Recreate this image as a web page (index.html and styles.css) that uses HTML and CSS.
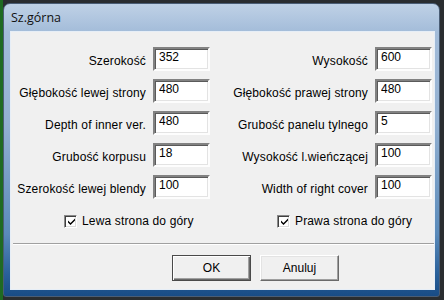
FILE: index.html
```html
<!DOCTYPE html>
<html lang="pl">
<head>
<meta charset="utf-8">
<title>Sz.górna</title>
<link rel="stylesheet" href="styles.css">
</head>
<body>
<div class="window">
  <div class="titlebar"><span class="title">Sz.górna</span></div>
  <div class="client">
    <div class="fields">
      <label class="lbl">Szerokość</label><input class="edit" type="text" value="352">
      <label class="lbl">Wysokość</label><input class="edit" type="text" value="600">
      <label class="lbl">Głębokość lewej strony</label><input class="edit" type="text" value="480">
      <label class="lbl">Głębokość prawej strony</label><input class="edit" type="text" value="480">
      <label class="lbl">Depth of inner ver.</label><input class="edit" type="text" value="480">
      <label class="lbl">Grubość panelu tylnego</label><input class="edit" type="text" value="5">
      <label class="lbl">Grubość korpusu</label><input class="edit" type="text" value="18">
      <label class="lbl">Wysokość l.wieńczącej</label><input class="edit" type="text" value="100">
      <label class="lbl">Szerokość lewej blendy</label><input class="edit" type="text" value="100">
      <label class="lbl">Width of right cover</label><input class="edit" type="text" value="100">
    </div>
    <div class="checks">
      <label class="check"><span class="box"><svg width="9" height="9" viewBox="0 0 9 9"><path d="M1 3.5 L3.5 6 L8 1.5 L8 3.5 L3.5 8 L1 5.5 Z" fill="#000"/></svg></span><span>Lewa strona do góry</span></label>
      <label class="check"><span class="box"><svg width="9" height="9" viewBox="0 0 9 9"><path d="M1 3.5 L3.5 6 L8 1.5 L8 3.5 L3.5 8 L1 5.5 Z" fill="#000"/></svg></span><span>Prawa strona do góry</span></label>
    </div>
    <div class="sep"></div>
    <div class="buttons">
      <button class="btn default" type="button">OK</button>
      <button class="btn" type="button">Anuluj</button>
    </div>
  </div>
</div>
</body>
</html>
```
FILE: styles.css
```css
html, body {
  margin: 0;
  padding: 0;
}
body {
  width: 444px;
  height: 300px;
  overflow: hidden;
  background: linear-gradient(90deg, #1f6a22 0 3px, #2a2d30 3px);
  font-family: "Liberation Sans", Arial, sans-serif;
  font-size: 12px;
  color: #000;
}
.window {
  box-sizing: border-box;
  margin: 3px 0 0 3px;
  width: 437px;
  height: 294px;
  padding: 0 6px 6px 6px;
  border-radius: 7px 7px 3px 3px;
  border: 1px solid #4a5d75;
  background: linear-gradient(180deg, #bfd1e6 0px, #a3bcd9 28px, #92b0d1 120px, #5a8aba 230px, #29609a 270px, #174a84 294px);
  display: flex;
  flex-direction: column;
}
.titlebar {
  height: 27px;
  display: flex;
  align-items: flex-start;
}
.title {
  font-family: "Open Sans", "Noto Sans", sans-serif;
  font-size: 12.5px;
  line-height: 14px;
  padding: 7px 0 0 1px;
  color: #111;
}
.client {
  box-sizing: border-box;
  width: 425px;
  height: 260px;
  background: #f0f0f0;
  border: 1px solid #e6eef7;
  padding-top: 15px;
}
.fields {
  display: grid;
  grid-template-columns: 135px 57px 151px 57px;
  grid-auto-rows: 24px;
  column-gap: 7px;
  row-gap: 8px;
}
.lbl {
  text-align: right;
  white-space: nowrap;
  line-height: 14px;
  padding-top: 7px;
  letter-spacing: 0.15px;
}
.edit {
  box-sizing: border-box;
  width: 57px;
  height: 24px;
  margin: 0;
  padding: 1px 4px 5px 4px;
  font-family: "Liberation Sans", Arial, sans-serif;
  font-size: 12px;
  line-height: 14px;
  color: #000;
  background: #fff;
  border: 2px solid;
  border-color: #828282 #fdfdfd #fdfdfd #828282;
  box-shadow: inset 1px 1px 0 #5a5a5a, inset -1px -1px 0 #e3e3e3;
  outline: none;
}
.checks {
  display: grid;
  grid-template-columns: 213px auto;
  padding-left: 53px;
  margin-top: 16px;
  height: 13px;
}
.check {
  display: flex;
  align-items: center;
  gap: 5px;
  line-height: 13px;
  white-space: nowrap;
  letter-spacing: 0.15px;
}
.box {
  box-sizing: border-box;
  width: 13px;
  height: 13px;
  background: #fff;
  border: 1px solid;
  border-color: #8a8a8a #ffffff #ffffff #8a8a8a;
  box-shadow: inset 1px 1px 0 #404040, inset -1px -1px 0 #dcdcdc;
  display: flex;
  align-items: center;
  justify-content: center;
  padding: 1px 0 0 1px;
}
.box svg {
  display: block;
}
.sep {
  margin: 15px 0 0 2px;
  height: 0;
  border-top: 1px solid #a0a0a0;
  border-bottom: 1px solid #ffffff;
}
.buttons {
  display: flex;
  gap: 9px;
  padding-left: 161px;
  margin-top: 10px;
}
.btn {
  box-sizing: border-box;
  width: 79px;
  height: 26px;
  margin: 0;
  padding: 0;
  font-family: "Liberation Sans", Arial, sans-serif;
  font-size: 12px;
  color: #000;
  background: #f0f0f0;
  border: 1px solid;
  border-color: #ffffff #6a6a6a #6a6a6a #ffffff;
  box-shadow: inset -1px -1px 0 #a0a0a0, inset 1px 1px 0 #e3e3e3;
}
.btn.default {
  border-color: #4a4a4a;
  box-shadow: inset 1px 1px 0 #ffffff, inset -1px -1px 0 #6a6a6a, inset -2px -2px 0 #a0a0a0;
}
```
